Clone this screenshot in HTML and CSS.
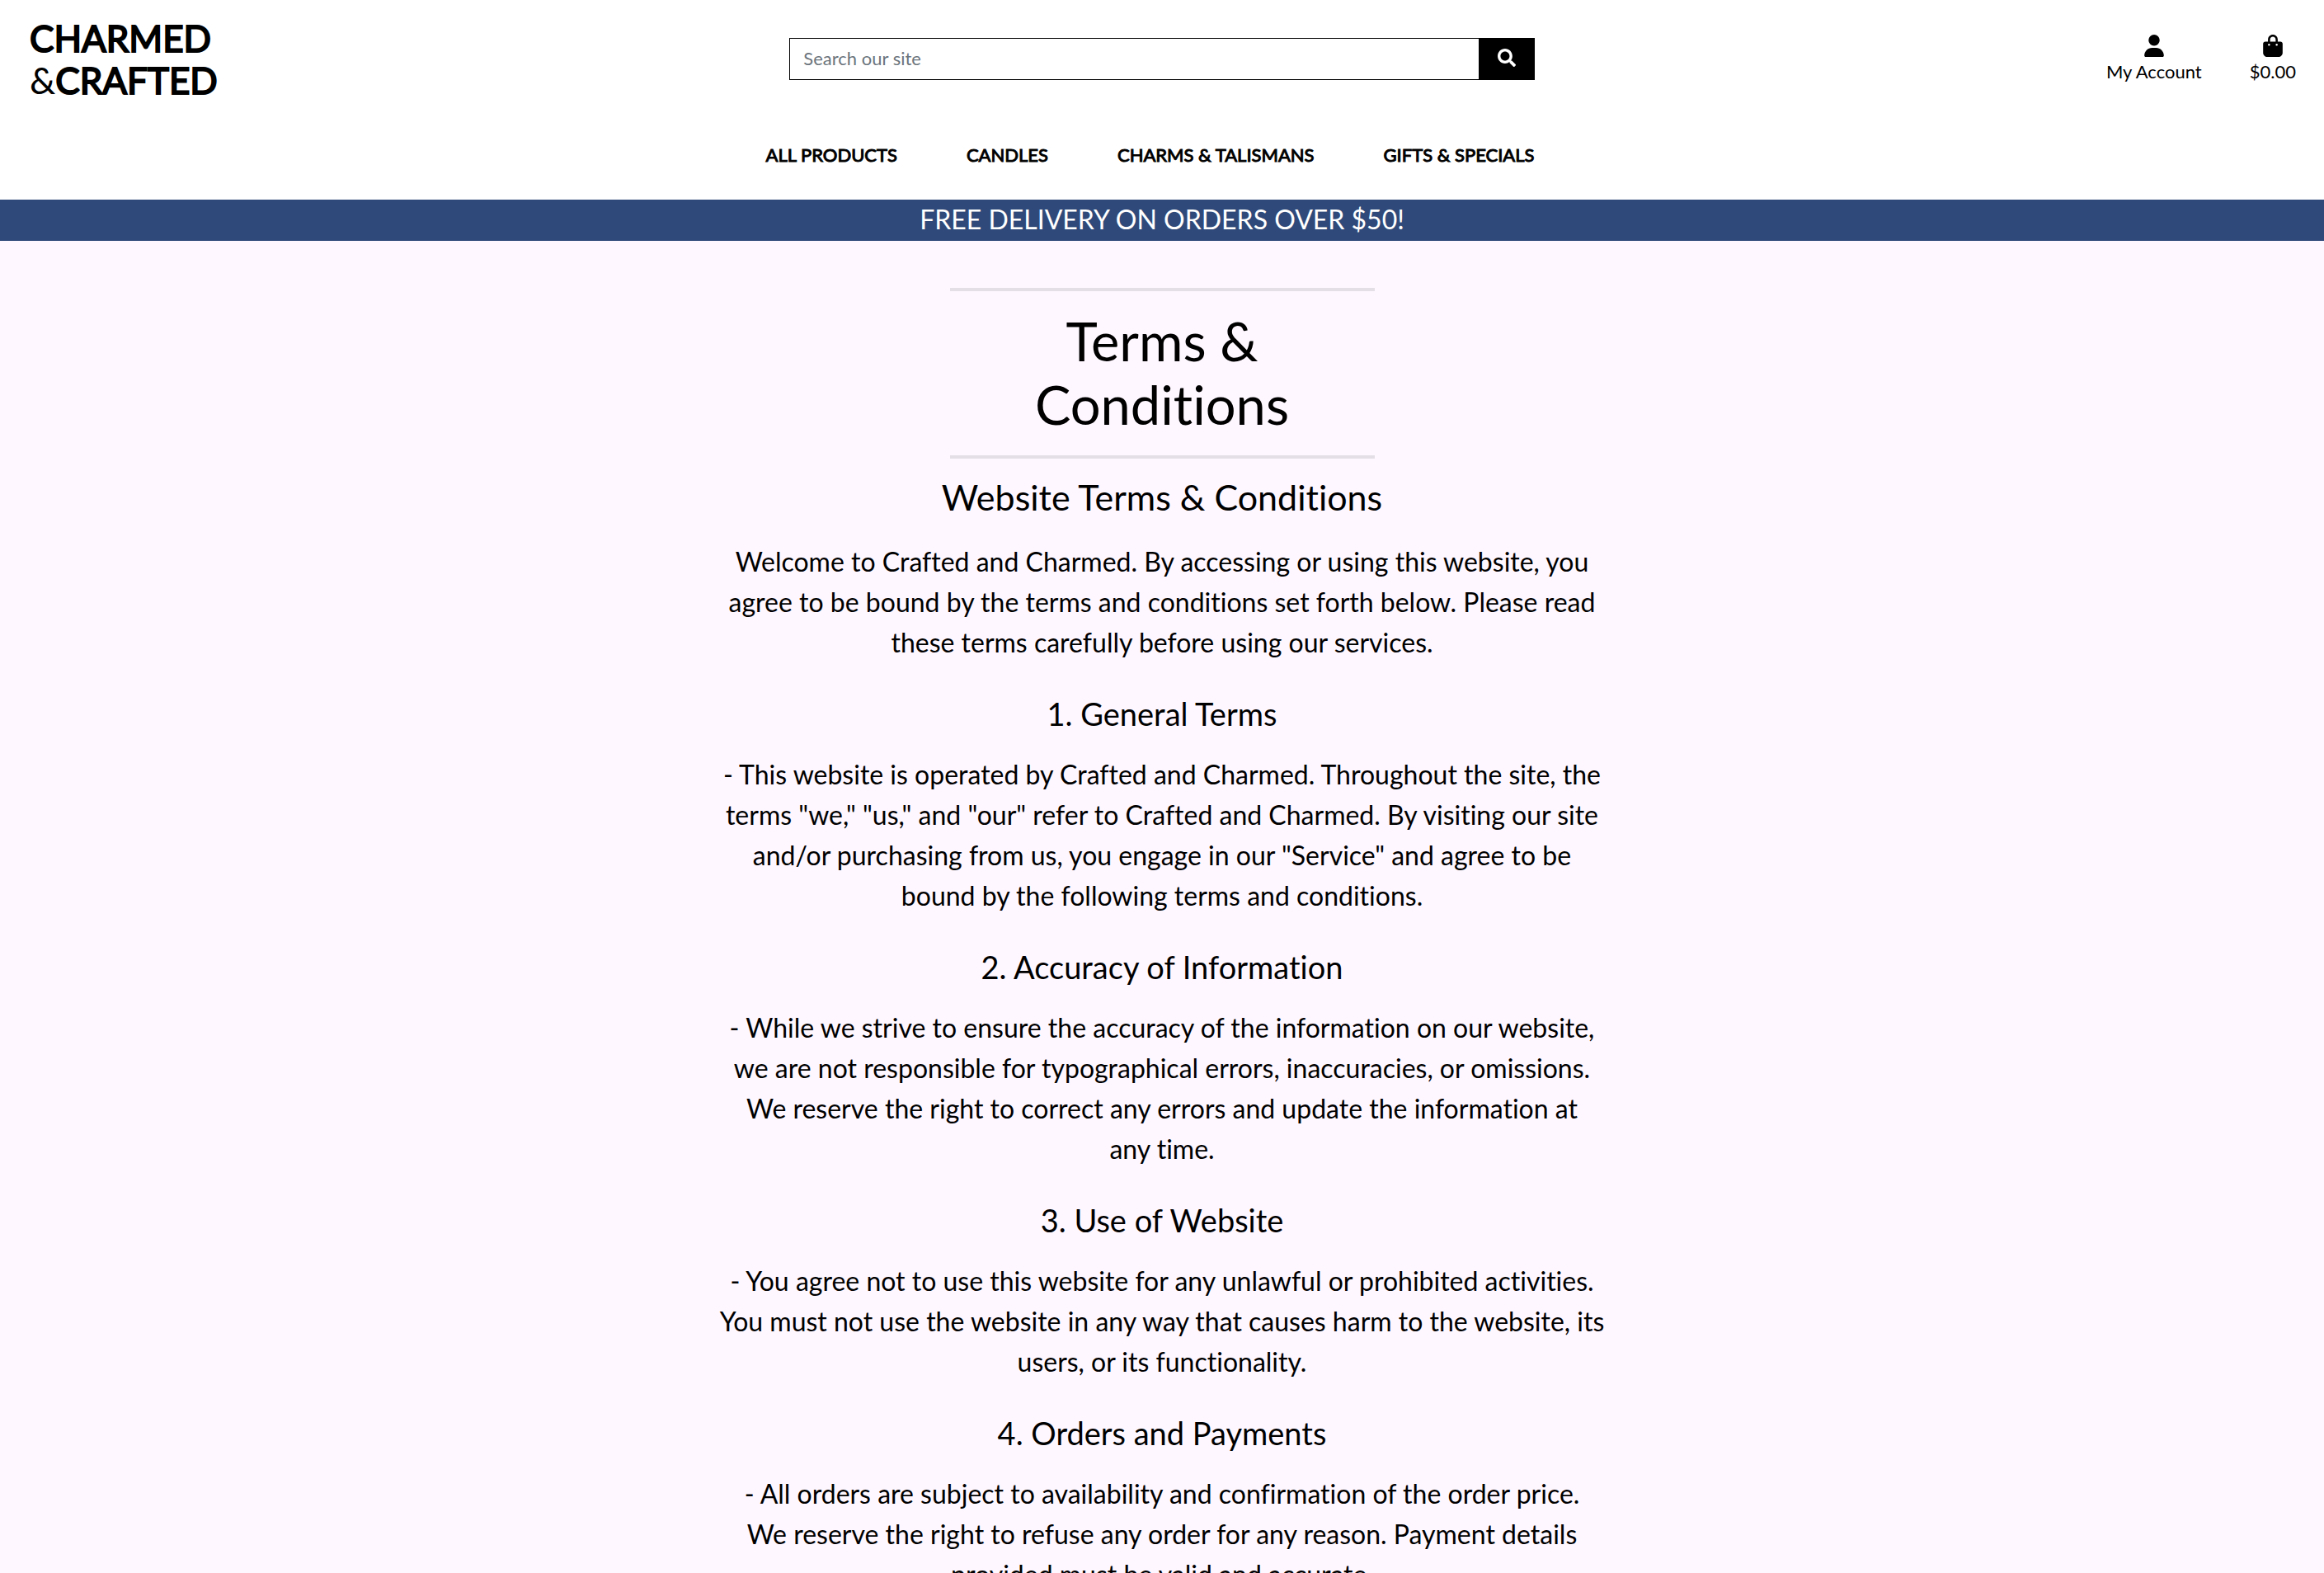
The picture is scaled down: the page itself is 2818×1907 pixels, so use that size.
FILE: index.html
```html
<!DOCTYPE html>
<html lang="en">
<head>
<meta charset="utf-8">
<meta name="viewport" content="width=device-width, initial-scale=1">
<title>Charmed &amp; Crafted - Terms &amp; Conditions</title>
<link rel="stylesheet" href="styles.css">
</head>
<body>
<header class="site-header">
  <div class="top-bar">
    <a class="logo" href="#"><strong>CHARMED</strong><br>&amp;<strong>CRAFTED</strong></a>
    <form class="search" role="search">
      <input class="search-input" type="text" placeholder="Search our site" aria-label="Search our site">
      <button class="search-button" type="button" aria-label="Search">
        <svg class="search-icon" viewBox="0 0 512 512" aria-hidden="true"><path fill="currentColor" d="M505 442.700L405.300 343c-4.500-4.500-10.600-7-17-7H372c27.600-35.300 44-79.700 44-128C416 93.100 322.900 0 208 0S0 93.100 0 208s93.100 208 208 208c48.300 0 92.700-16.400 128-44v16.300c0 6.400 2.500 12.500 7 17l99.700 99.700c9.400 9.400 24.600 9.400 33.900 0l28.300-28.300c9.400-9.400 9.400-24.600.1-34zM208 336c-70.700 0-128-57.200-128-128 0-70.700 57.200-128 128-128 70.700 0 128 57.200 128 128 0 70.700-57.200 128-128 128z"/></svg>
      </button>
    </form>
    <ul class="user-links">
      <li><a class="user-link" href="#">
        <svg class="user-icon" viewBox="0 0 448 512" aria-hidden="true"><path fill="currentColor" d="M224 256A128 128 0 1 0 224 0a128 128 0 1 0 0 256zm-45.700 48C79.800 304 0 383.800 0 482.300C0 498.700 13.300 512 29.700 512H418.300c16.400 0 29.700-13.300 29.700-29.700C448 383.800 368.200 304 269.700 304H178.300z"/></svg>
        <span>My Account</span></a></li>
      <li><a class="user-link" href="#">
        <svg class="user-icon" viewBox="0 0 448 512" aria-hidden="true"><path fill="currentColor" d="M160 112c0-35.300 28.700-64 64-64s64 28.700 64 64v48H160V112zm-48 48H48c-26.500 0-48 21.500-48 48V416c0 53 43 96 96 96H352c53 0 96-43 96-96V208c0-26.500-21.500-48-48-48H336V112C336 50.100 285.900 0 224 0S112 50.100 112 112v48zm24 48a24 24 0 1 1 0 48 24 24 0 1 1 0-48zm152 24a24 24 0 1 1 48 0 24 24 0 1 1-48 0z"/></svg>
        <span>$0.00</span></a></li>
    </ul>
  </div>
  <nav class="main-nav" aria-label="Main">
    <a class="nav-link" href="#">ALL PRODUCTS</a>
    <a class="nav-link" href="#">CANDLES</a>
    <a class="nav-link" href="#">CHARMS &amp; TALISMANS</a>
    <a class="nav-link" href="#">GIFTS &amp; SPECIALS</a>
  </nav>
</header>
<div class="delivery-banner">FREE DELIVERY ON ORDERS OVER $50!</div>
<main class="terms">
  <hr class="rule">
  <h1 class="page-title">Terms &amp; Conditions</h1>
  <hr class="rule">
  <h2 class="terms-title">Website Terms &amp; Conditions</h2>
  <p class="terms-text">Welcome to Crafted and Charmed. By accessing or using this website, you agree to be bound by the terms and conditions set forth below. Please read these terms carefully before using our services.</p>
  <h3 class="section-title">1. General Terms</h3>
  <p class="terms-text">- This website is operated by Crafted and Charmed. Throughout the site, the terms "we," "us," and "our" refer to Crafted and Charmed. By visiting our site and/or purchasing from us, you engage in our "Service" and agree to be bound by the following terms and conditions.</p>
  <h3 class="section-title">2. Accuracy of Information</h3>
  <p class="terms-text">- While we strive to ensure the accuracy of the information on our website, we are not responsible for typographical errors, inaccuracies, or omissions. We reserve the right to correct any errors and update the information at any&nbsp;time.</p>
  <h3 class="section-title">3. Use of Website</h3>
  <p class="terms-text">- You agree not to use this website for any unlawful or prohibited activities. You must not use the website in any way that causes harm to the website, its users, or its functionality.</p>
  <h3 class="section-title">4. Orders and Payments</h3>
  <p class="terms-text">- All orders are subject to availability and confirmation of the order price. We&nbsp;reserve the right to refuse any order for any reason. Payment details provided must be valid and accurate.</p>
</main>
</body>
</html>
```
FILE: styles.css
```css
* { box-sizing: border-box; }

body {
  margin: 0;
  background: #fef7ff;
  color: #000;
  font-family: Lato, "Liberation Sans", sans-serif;
  font-size: 22px;
  font-variant-ligatures: none;
  line-height: 32px;
}

a { color: inherit; text-decoration: none; }

.site-header { background: #fff; }

.top-bar {
  display: grid;
  grid-template-columns: repeat(3, 1fr);
  align-items: center;
  height: 143px;
}

.logo {
  padding-left: 36px;
  font-size: 44px;
  line-height: 51px;
}

.logo strong {
  font-weight: 400;
  -webkit-text-stroke: 2px currentColor;
}

.search {
  display: flex;
  height: 51px;
  margin: 0 18px;
}

.search-input {
  flex: 1;
  min-width: 0;
  padding: 0 16px 2px;
  border: 1px solid #000;
  border-radius: 0;
  background: #fff;
  font: inherit;
}

.search-input::placeholder { color: #6c757d; opacity: 1; }

.search-button {
  width: 67px;
  padding: 0;
  border: 0;
  background: #000;
  color: #fff;
}

.search-icon { width: 22px; height: 22px; }

.user-links {
  display: flex;
  justify-content: flex-end;
  gap: 58px;
  margin: 0;
  padding: 2px 34px 0 0;
  list-style: none;
}

.user-link {
  display: flex;
  flex-direction: column;
  align-items: center;
  gap: 2px;
}

.user-icon { width: 24px; height: 27px; }

.main-nav {
  display: flex;
  justify-content: center;
  gap: 84px;
  height: 99px;
  padding: 29px 29px 0 0;
}

.nav-link { -webkit-text-stroke: 1px currentColor; }

.delivery-banner {
  padding-bottom: 2px;
  background: #2f4a7a;
  color: #fff;
  font-size: 32px;
  line-height: 48px;
  text-align: center;
}

.terms {
  max-width: 1080px;
  margin: 0 auto;
  padding-top: 57px;
  text-align: center;
}

.rule {
  max-width: 515px;
  height: 4px;
  margin: 0 auto;
  border: 0;
  background: #e4dee6;
}

.page-title {
  max-width: 515px;
  margin: 0 auto;
  padding: 22px 80px 23px;
  font-size: 65px;
  font-weight: 400;
  line-height: 77px;
}

.terms-title {
  margin: 21px 0 28px;
  font-size: 43px;
  font-weight: 400;
  line-height: 51px;
}

.section-title {
  margin: 0 0 25px;
  font-size: 38px;
  font-weight: 400;
  line-height: 47px;
}

.terms-text {
  margin: 0 0 39px;
  font-size: 32px;
  line-height: 49px;
}
```
